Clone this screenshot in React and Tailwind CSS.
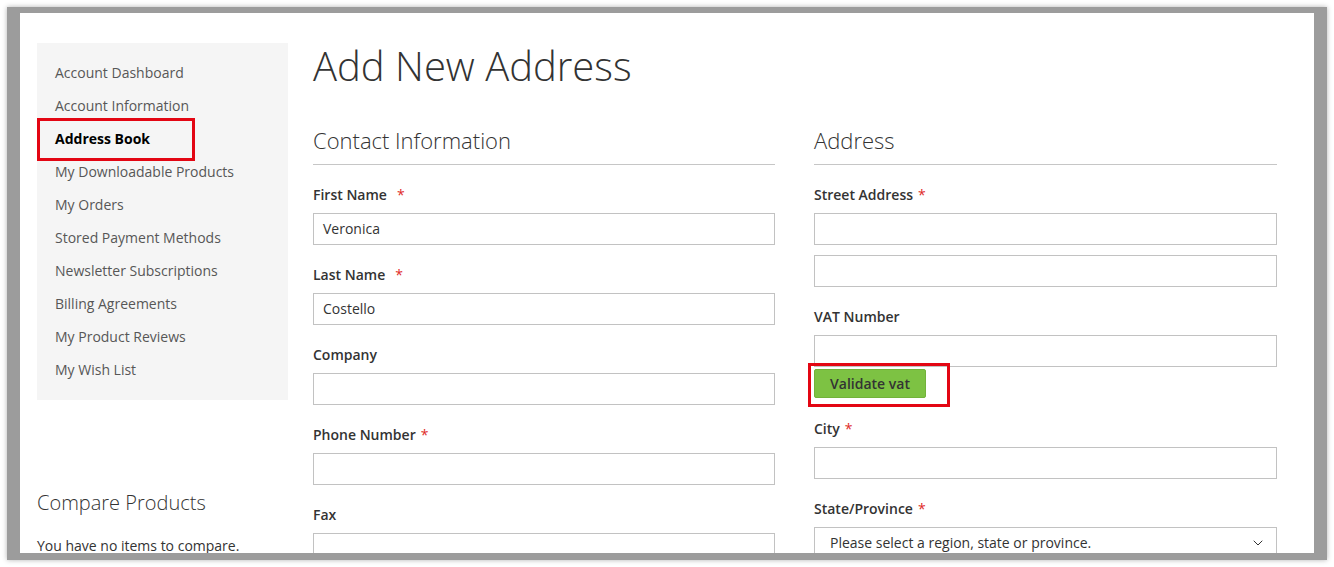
import { ChevronDown } from 'lucide-react';

const NAV = [
  'Account Dashboard',
  'Account Information',
  'Address Book',
  'My Downloadable Products',
  'My Orders',
  'Stored Payment Methods',
  'Newsletter Subscriptions',
  'Billing Agreements',
  'My Product Reviews',
  'My Wish List',
];

function Label({ text, required, wide }) {
  return (
    <label className="block h-5 text-sm leading-5 font-semibold text-[#333]">
      {text}
      {required && (
        <span className={`text-[#e02b27] font-normal ${wide ? 'ml-[10px]' : 'ml-[5px]'}`}>*</span>
      )}
    </label>
  );
}

function Input({ value }) {
  return (
    <div className="h-8 border border-[#c2c2c2] bg-white px-[9px] flex items-center text-sm text-[#333]">
      {value}
    </div>
  );
}

function Field({ label, required, wide, value }) {
  return (
    <div className="mt-[20px]">
      <Label text={label} required={required} wide={wide} />
      <div className="mt-[8px]">
        <Input value={value} />
      </div>
    </div>
  );
}

export default function App() {
  return (
    <div className="w-[1334px] h-[567px] bg-white relative" style={{ fontFamily: '"Open Sans", "Liberation Sans", sans-serif' }}>
      {/* screenshot frame */}
      <div className="absolute left-[7px] top-[7px] w-[1320px] h-[553px] bg-[#9c9c9c] pl-[13px] pr-[13px] pt-[6px] pb-[7px] shadow-[0_0_5px_rgba(0,0,0,0.3)]">
        <div className="w-full h-full bg-white overflow-hidden flex pl-[17px]">
          {/* Sidebar */}
          <aside className="w-[251px] shrink-0 pt-[30px]">
            <nav className="bg-[#f5f5f5] pt-[13px] pb-[14px] pl-[18px]">
              {NAV.map((item) => (
                <div key={item} className="relative h-[33px] leading-[33px] text-sm">
                  {item === 'Address Book' ? (
                    <>
                      <span className="font-bold text-black">{item}</span>
                      <div className="absolute left-[-18px] top-[-4px] w-[158px] h-[43px] border-[3px] border-[#e30613]" />
                    </>
                  ) : (
                    <span className="text-[#575757]">{item}</span>
                  )}
                </div>
              ))}
            </nav>
            <div className="mt-[89px]">
              <h3 className="text-xl font-light text-[#333] leading-7">Compare Products</h3>
              <p className="mt-[19px] text-sm text-[#333] leading-5">You have no items to compare.</p>
            </div>
          </aside>

          {/* Main */}
          <main className="ml-[25px] w-[964px] pt-[29px]">
            <h1 className="text-[40px] leading-[48px] font-light text-[#333]">Add New Address</h1>
            <div className="mt-[36px] grid grid-cols-[462px_463px] gap-x-[39px]">
              {/* Contact information */}
              <section>
                <h2 className="text-[22px] leading-7 font-light text-[#333] pb-[10px] border-b border-[#c6c6c6]">
                  Contact Information
                </h2>
                <Field label="First Name" required wide value="Veronica" />
                <Field label="Last Name" required wide value="Costello" />
                <Field label="Company" />
                <Field label="Phone Number" required />
                <Field label="Fax" />
              </section>

              {/* Address */}
              <section>
                <h2 className="text-[22px] leading-7 font-light text-[#333] pb-[10px] border-b border-[#c6c6c6]">
                  Address
                </h2>
                <div className="mt-[20px]">
                  <Label text="Street Address" required />
                  <div className="mt-[8px] flex flex-col gap-[10px]">
                    <Input />
                    <Input />
                  </div>
                </div>
                <div className="mt-[20px]">
                  <Label text="VAT Number" />
                  <div className="mt-[8px]">
                    <Input />
                  </div>
                  <div className="relative mt-[2px] w-[112px]">
                    <button className="w-[112px] h-[29px] bg-[#7dc243] border border-[#72b23b] rounded-[2px] text-sm font-semibold text-[#333]">
                      Validate vat
                    </button>
                    <div className="absolute left-[-6px] top-[-6px] w-[142px] h-[44px] border-[3px] border-[#e30613]" />
                  </div>
                </div>
                <div className="mt-[21px]">
                  <Label text="City" required />
                  <div className="mt-[8px]">
                    <Input />
                  </div>
                </div>
                <div className="mt-[20px]">
                  <Label text="State/Province" required />
                  <div className="mt-[8px] h-8 border border-[#c2c2c2] bg-white pl-[15px] pr-[10px] flex items-center justify-between text-sm text-[#333]">
                    <span>Please select a region, state or province.</span>
                    <ChevronDown size={16} strokeWidth={1.5} className="text-[#333]" />
                  </div>
                </div>
              </section>
            </div>
          </main>
        </div>
      </div>
    </div>
  );
}
